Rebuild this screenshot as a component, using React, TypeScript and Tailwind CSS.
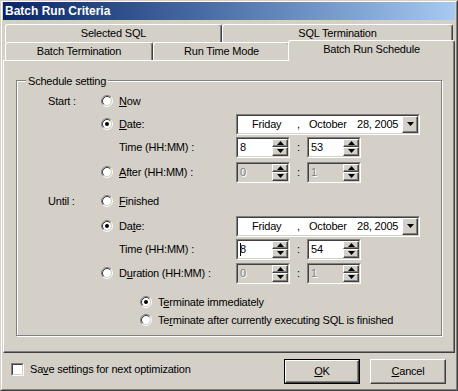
import React from "react";

const sunkenOuter =
  "border border-t-[#808080] border-l-[#808080] border-r-white border-b-white";
const sunkenInner =
  "border border-t-[#404040] border-l-[#404040] border-r-[#d4d0c8] border-b-[#d4d0c8]";
const raised =
  "border border-t-white border-l-white border-r-[#404040] border-b-[#404040] shadow-[inset_-1px_-1px_0_#808080] bg-[#d4d0c8]";

function Sunken({
  className = "",
  innerClassName = "",
  children,
}: {
  className?: string;
  innerClassName?: string;
  children?: React.ReactNode;
}) {
  return (
    <div className={`${sunkenOuter} ${className}`}>
      <div className={`${sunkenInner} w-full h-full ${innerClassName}`}>{children}</div>
    </div>
  );
}

function Radio({ checked }: { checked?: boolean }) {
  return (
    <svg width="12" height="12" viewBox="0 0 12 12" className="shrink-0">
      <circle cx="6" cy="6" r="4.2" fill="#fff" />
      <path d="M2.11 9.89 A5.5 5.5 0 0 1 9.89 2.11" stroke="#808080" fill="none" />
      <path d="M9.89 2.11 A5.5 5.5 0 0 1 2.11 9.89" stroke="#fff" fill="none" />
      <path d="M2.82 9.18 A4.5 4.5 0 0 1 9.18 2.82" stroke="#404040" fill="none" />
      <path d="M9.18 2.82 A4.5 4.5 0 0 1 2.82 9.18" stroke="#d4d0c8" fill="none" />
      {checked && <circle cx="6" cy="6" r="2" fill="#000" />}
    </svg>
  );
}

function Up() {
  return (
    <svg width="7" height="4" viewBox="0 0 7 4">
      <path d="M3.5 0L7 4H0z" fill="#000" />
    </svg>
  );
}
function Down() {
  return (
    <svg width="7" height="4" viewBox="0 0 7 4">
      <path d="M0 0h7L3.5 4z" fill="#000" />
    </svg>
  );
}

function Spin({ value, disabled, cursor }: { value: string; disabled?: boolean; cursor?: boolean }) {
  return (
    <Sunken
      className="w-[54px] h-[21px]"
      innerClassName={`flex ${disabled ? "bg-[#d4d0c8]" : "bg-white"}`}
    >
      <div
        className={`flex-1 pl-[2px] flex items-center ${
          disabled ? "text-[#808080] [text-shadow:1px_1px_0_#fff]" : ""
        }`}
      >
        {cursor && <span className="w-px h-[13px] bg-black mr-[-1px]" />}
        <span>{value}</span>
      </div>
      <div className="w-[16px] flex flex-col">
        <div className={`${raised} flex-1 flex items-center justify-center`}>
          <Up />
        </div>
        <div className={`${raised} flex-1 flex items-center justify-center`}>
          <Down />
        </div>
      </div>
    </Sunken>
  );
}

function DateField() {
  return (
    <Sunken className="w-[184px] h-[21px]" innerClassName="flex bg-white">
      <div className="flex-1 flex items-center pl-[14px] whitespace-nowrap">
        <span className="w-[45px]">Friday</span>
        <span className="w-[12px]">,</span>
        <span className="w-[48px]">October</span>
        <span>28, 2005</span>
      </div>
      <div className={`${raised} w-[16px] flex items-center justify-center`}>
        <Down />
      </div>
    </Sunken>
  );
}

function SpinPair({
  a,
  b,
  disabled,
  cursor,
}: {
  a: string;
  b: string;
  disabled?: boolean;
  cursor?: boolean;
}) {
  return (
    <div className="flex items-center">
      <Spin value={a} disabled={disabled} cursor={cursor} />
      <span className="w-[17px] text-center">:</span>
      <Spin value={b} disabled={disabled} />
    </div>
  );
}

function Row({
  label,
  children,
  control,
  className = "",
}: {
  label?: string;
  children?: React.ReactNode;
  control?: React.ReactNode;
  className?: string;
}) {
  return (
    <div className={`flex items-center h-[22px] ${className}`}>
      <div className="w-[53px] whitespace-nowrap">{label}</div>
      <div className="w-[135px] flex items-center whitespace-nowrap">{children}</div>
      <div>{control}</div>
    </div>
  );
}

function RadioLabel({ checked, children }: { checked?: boolean; children: React.ReactNode }) {
  return (
    <>
      <Radio checked={checked} />
      <span className="ml-[6px]">{children}</span>
    </>
  );
}

const tabBase =
  "flex items-center justify-center border-t border-l border-r border-t-white border-l-white border-r-[#404040] shadow-[inset_-1px_0_0_#808080] rounded-t-[3px] bg-[#d4d0c8] whitespace-nowrap";

export default function App() {
  return (
    <div className="w-[458px] h-[391px] bg-[#d4d0c8] font-['Liberation_Sans',Arial,sans-serif] text-[11px] leading-[13px] tracking-[-0.2px] text-black border border-t-[#d4d0c8] border-l-[#d4d0c8] border-r-[#404040] border-b-[#404040] overflow-hidden">
      <div className="w-full h-full border border-t-white border-l-white border-r-[#808080] border-b-[#808080] px-px flex flex-col">
        {/* Title bar */}
        <div className="h-[18px] bg-linear-to-r from-[#0a246a] to-[#a6caf0] flex items-center pl-[2px] text-white font-bold text-[12px] tracking-normal">
          Batch Run Criteria
        </div>

        {/* Tabs */}
        <div className="mt-[4px] flex flex-col">
          <div className="flex h-[18px] pl-[2px]">
            <div className={`${tabBase} w-[217px]`}>Selected SQL</div>
            <div className={`${tabBase} w-[231px]`}>SQL Termination</div>
          </div>
          <div className="flex h-[18px] pl-[2px] relative z-10">
            <div className={`${tabBase} w-[148px]`}>Batch Termination</div>
            <div className={`${tabBase} w-[137px]`}>Run Time Mode</div>
            <div
              className={`${tabBase} w-[167px] h-[21px] -mt-[2px] -ml-[2px] pb-[3px] relative z-10`}
            >
              Batch Run Schedule
            </div>
          </div>

          {/* Panel */}
          <div className="h-[293px] border border-t-white border-l-white border-r-[#404040] border-b-[#404040] shadow-[inset_-1px_-1px_0_#808080] pt-[19px] pl-[12px]">
            <div className="relative w-[426px] h-[256px] border border-[#808080] shadow-[inset_1px_1px_0_#fff,1px_1px_0_#fff] pl-[31px] pt-[9px]">
              <div className="absolute left-[9px] -top-[7px] px-[2px] bg-[#d4d0c8] leading-[14px]">
                Schedule setting
              </div>

              <Row label="Start :">
                <RadioLabel>
                  <u>N</u>ow
                </RadioLabel>
              </Row>
              <Row className="mt-[1px]" control={<DateField />}>
                <RadioLabel checked>
                  <u>D</u>ate:
                </RadioLabel>
              </Row>
              <Row className="mt-[1px]" control={<SpinPair a="8" b="53" />}>
                <span className="pl-[18px]">Time (HH:MM) :</span>
              </Row>
              <Row className="mt-[3px]" control={<SpinPair a="0" b="1" disabled />}>
                <RadioLabel>
                  <u>A</u>fter (HH:MM) :
                </RadioLabel>
              </Row>

              <Row label="Until :" className="mt-[7px]">
                <RadioLabel>
                  <u>F</u>inished
                </RadioLabel>
              </Row>
              <Row className="mt-[3px]" control={<DateField />}>
                <RadioLabel checked>
                  Da<u>t</u>e:
                </RadioLabel>
              </Row>
              <Row className="mt-[1px]" control={<SpinPair a="8" b="54" cursor />}>
                <span className="pl-[18px]">Time (HH:MM) :</span>
              </Row>
              <Row className="mt-[2px]" control={<SpinPair a="0" b="1" disabled />}>
                <RadioLabel>
                  D<u>u</u>ration (HH:MM) :
                </RadioLabel>
              </Row>

              <div className="flex items-center h-[18px] ml-[92px] mt-[9px]">
                <RadioLabel checked>
                  T<u>e</u>rminate immediately
                </RadioLabel>
              </div>
              <div className="flex items-center h-[18px] ml-[92px]">
                <RadioLabel>
                  Te<u>r</u>minate after currently executing SQL is finished
                </RadioLabel>
              </div>
            </div>
          </div>
        </div>

        {/* Bottom bar */}
        <div className="flex-1 flex items-start justify-between pl-[8px] pr-[9px] pt-[6px]">
          <div className="flex items-center mt-[4px]">
            <Sunken className="w-[13px] h-[13px]" innerClassName="bg-white" />
            <span className="ml-[6px]">
              Sa<u>v</u>e settings for next optimization
            </span>
          </div>
          <div className="flex gap-[10px]">
            <div className="w-[76px] h-[25px] border border-black">
              <div className={`${raised} w-full h-full flex items-center justify-center`}>
                <span>
                  <u>O</u>K
                </span>
              </div>
            </div>
            <div className={`${raised} w-[76px] h-[25px] flex items-center justify-center`}>
              <span>
                <u>C</u>ancel
              </span>
            </div>
          </div>
        </div>
      </div>
    </div>
  );
}
